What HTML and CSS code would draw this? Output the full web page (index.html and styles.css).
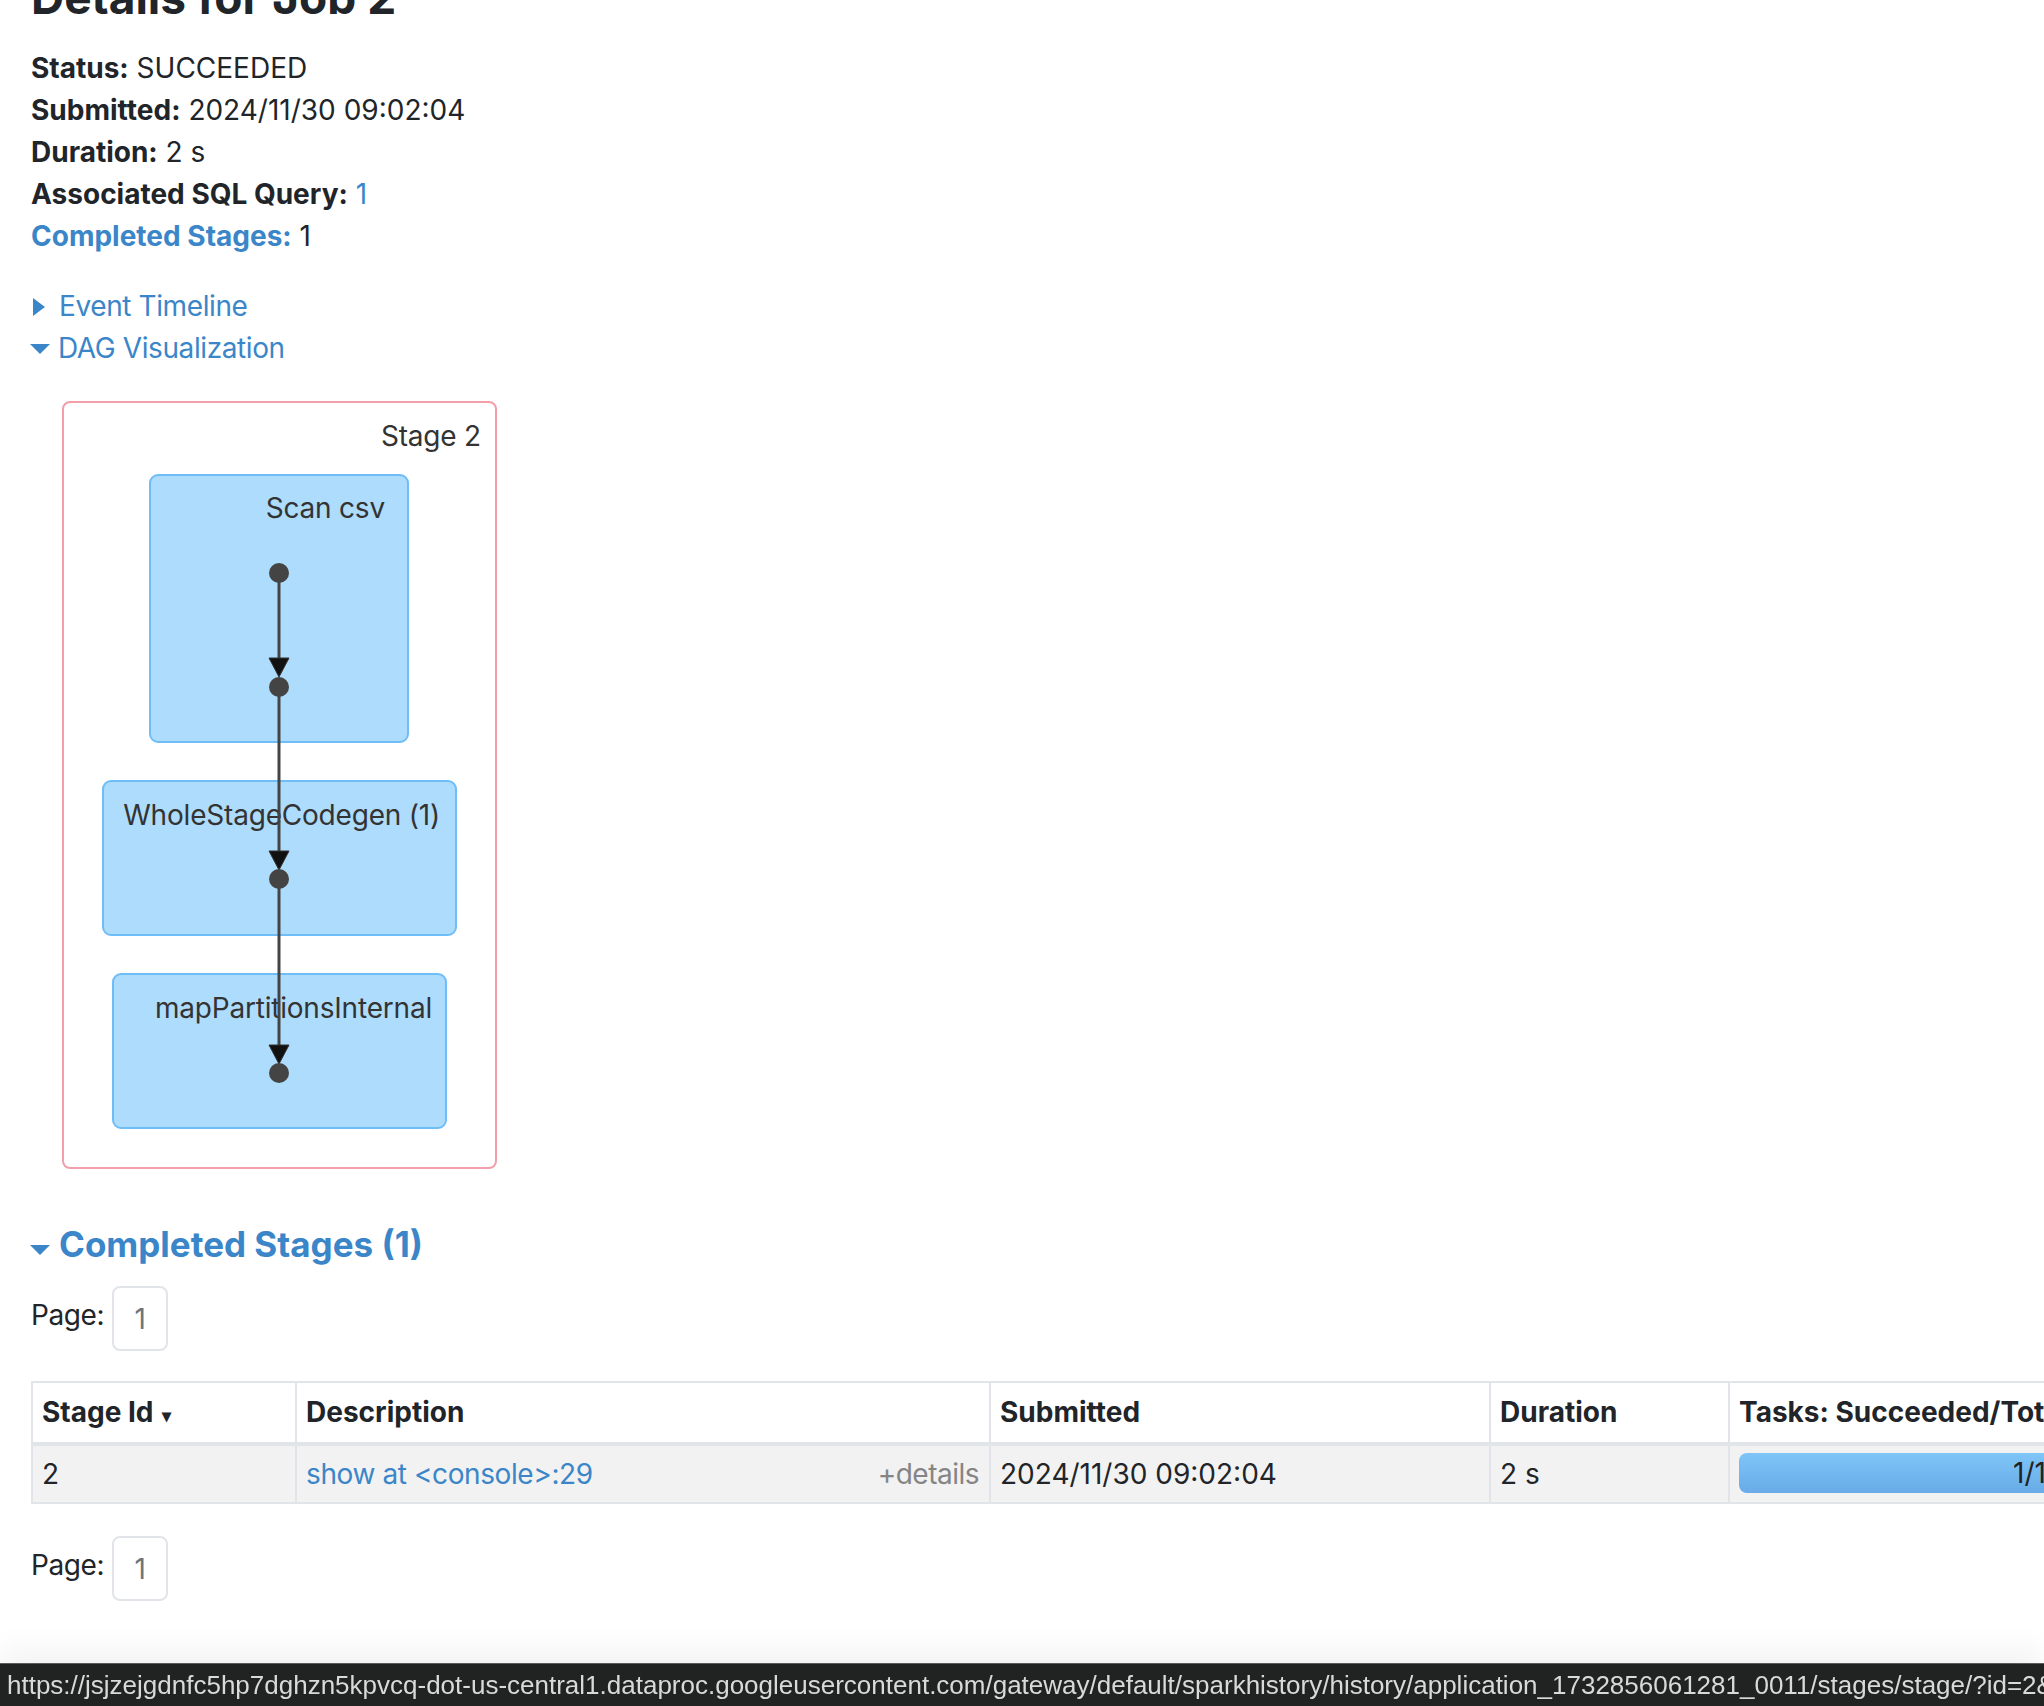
FILE: index.html
```html
<!DOCTYPE html>
<html>
<head>
<meta charset="utf-8">
<title>Details for Job 2</title>
<link rel="stylesheet" href="styles.css">
</head>
<body>
<div class="page">
  <h3 class="title">Details for Job 2</h3>
  <ul class="summary">
    <li><strong>Status:</strong> SUCCEEDED</li>
    <li><strong>Submitted:</strong> 2024/11/30 09:02:04</li>
    <li><strong>Duration:</strong> 2 s</li>
    <li><strong>Associated SQL Query:</strong> <a class="link" href="#">1</a></li>
    <li><a class="link strong-link" href="#">Completed Stages:</a> 1</li>
  </ul>

  <div class="toggle toggle-closed">
    <span class="arrow-closed"></span>
    <a class="link" href="#">Event Timeline</a>
  </div>
  <div class="toggle toggle-open">
    <span class="arrow-open"></span>
    <a class="link" href="#">DAG Visualization</a>
  </div>

  <svg class="dag" width="500" height="804" viewBox="0 0 500 804" xmlns="http://www.w3.org/2000/svg">
    <rect x="32" y="33" width="433" height="766" rx="7" ry="7" fill="#ffffff" stroke="#f29fab" stroke-width="2"/>
    <text x="450" y="77" text-anchor="end" class="dag-label">Stage 2</text>

    <rect x="119" y="106" width="258" height="267" rx="8" ry="8" fill="#addcfc" stroke="#6fbdf6" stroke-width="2"/>
    <text x="354" y="149" text-anchor="end" class="dag-label">Scan csv</text>

    <rect x="72" y="412" width="353" height="154" rx="8" ry="8" fill="#addcfc" stroke="#6fbdf6" stroke-width="2"/>
    <text x="409" y="456" text-anchor="end" class="dag-label">WholeStageCodegen (1)</text>

    <rect x="82" y="605" width="333" height="154" rx="8" ry="8" fill="#addcfc" stroke="#6fbdf6" stroke-width="2"/>
    <text x="401" y="649" text-anchor="end" class="dag-label">mapPartitionsInternal</text>

    <line x1="248" y1="204" x2="248" y2="298" stroke="#444444" stroke-width="3"/>
    <polygon points="238,289 258,289 248,308" fill="#111111" stroke="#333333" stroke-width="1"/>
    <line x1="248" y1="318" x2="248" y2="492" stroke="#444444" stroke-width="3"/>
    <polygon points="238,482 258,482 248,501" fill="#111111" stroke="#333333" stroke-width="1"/>
    <line x1="248" y1="510" x2="248" y2="686" stroke="#444444" stroke-width="3"/>
    <polygon points="238,676 258,676 248,695" fill="#111111" stroke="#333333" stroke-width="1"/>

    <circle cx="248" cy="204" r="10" fill="#444444"/>
    <circle cx="248" cy="318" r="10" fill="#444444"/>
    <circle cx="248" cy="510" r="10" fill="#444444"/>
    <circle cx="248" cy="704" r="10" fill="#444444"/>
  </svg>

  <h4 class="section-title">
    <span class="arrow-open arrow-section"></span>
    <a class="link section-link" href="#">Completed Stages (1)</a>
  </h4>

  <div class="pager pager-top">
    <span class="pager-label">Page:</span>
    <span class="pager-box">1</span>
  </div>

  <table class="stages">
    <colgroup>
      <col class="c-id">
      <col class="c-desc">
      <col class="c-sub">
      <col class="c-dur">
      <col class="c-tasks">
      <col class="c-more">
      <col class="c-more">
    </colgroup>
    <thead>
      <tr>
        <th class="first">Stage Id <span class="sort">&#x25BE;</span></th>
        <th>Description</th>
        <th>Submitted</th>
        <th>Duration</th>
        <th>Tasks: Succeeded/Total</th>
        <th>Input</th>
        <th>Output</th>
      </tr>
    </thead>
    <tbody>
      <tr>
        <td class="first">2</td>
        <td class="desc"><a class="link" href="#">show at &lt;console&gt;:29</a><span class="details">+details</span></td>
        <td>2024/11/30 09:02:04</td>
        <td>2 s</td>
        <td class="tasks"><div class="progress"><span class="progress-text">1/1</span></div></td>
        <td></td>
        <td></td>
      </tr>
    </tbody>
  </table>

  <div class="pager pager-bottom">
    <span class="pager-label">Page:</span>
    <span class="pager-box">1</span>
  </div>
</div>

<div class="statusbar">https://jsjzejgdnfc5hp7dghzn5kpvcq-dot-us-central1.dataproc.googleusercontent.com/gateway/default/sparkhistory/history/application_1732856061281_0011/stages/stage/?id=2&amp;attempt=0</div>
</body>
</html>
```

FILE: styles.css
```css
html, body {
  margin: 0;
  padding: 0;
  background: #ffffff;
  overflow: hidden;
}

body {
  width: 2044px;
  height: 1706px;
  font-family: Inter, "Noto Sans", "Liberation Sans", sans-serif;
  font-size: 28px;
  line-height: 42px;
  color: #212529;
}

.page {
  padding-left: 31px;
  width: 3200px;
}

.title {
  font-size: 46px;
  line-height: 55px;
  font-weight: 700;
  margin: -30px 0 22px 0;
  color: #212529;
}

.summary {
  list-style: none;
  margin: 0 0 28px 0;
  padding: 0;
}

.summary strong {
  font-weight: 700;
}

.link {
  color: #3b86c8;
  text-decoration: none;
  letter-spacing: -0.4px;
}

.strong-link {
  font-weight: 700;
  letter-spacing: 0;
}

.toggle {
  display: flex;
  align-items: flex-start;
  height: 42px;
}

.arrow-closed {
  display: block;
  width: 0;
  height: 0;
  border-top: 9px solid transparent;
  border-bottom: 9px solid transparent;
  border-left: 12px solid #3b86c8;
  margin: 13px 14px 0 2px;
}

.arrow-open {
  display: block;
  width: 0;
  height: 0;
  border-left: 10px solid transparent;
  border-right: 10px solid transparent;
  border-top: 10px solid #3b86c8;
  margin: 17px 8px 0 -1px;
}

.dag {
  display: block;
}

.dag-label {
  font-family: Inter, "Noto Sans", "Liberation Sans", sans-serif;
  font-size: 28px;
  letter-spacing: -0.2px;
  fill: #333333;
}

.section-title {
  display: flex;
  align-items: flex-start;
  font-size: 35px;
  line-height: 43px;
  font-weight: 700;
  margin: 50px 0 20px 0;
}

.section-link {
  letter-spacing: 0;
}

.arrow-section {
  margin-top: 22px;
  margin-left: -1px;
  margin-right: 9px;
}

.pager {
  display: flex;
  align-items: flex-start;
}

.pager-label {
  margin-top: 8px;
  margin-right: 8px;
  letter-spacing: -0.4px;
}

.pager-box {
  display: block;
  box-sizing: border-box;
  width: 56px;
  height: 65px;
  border: 2px solid #e1e4e8;
  border-radius: 8px;
  padding: 10px 0 9px 0;
  text-align: center;
  color: #6c757d;
}

.pager-top {
  margin-bottom: 30px;
}

.pager-bottom {
  margin-top: 32px;
}

.stages {
  table-layout: fixed;
  border-collapse: separate;
  border-spacing: 0;
  width: 2800px;
}

.c-id { width: 266px; }
.c-desc { width: 694px; }
.c-sub { width: 500px; }
.c-dur { width: 239px; }
.c-tasks { width: 602px; }
.c-more { width: 250px; }

.stages th,
.stages td {
  box-sizing: border-box;
  text-align: left;
  vertical-align: top;
  white-space: nowrap;
  border-right: 2px solid #e1e4e8;
}

.stages th {
  padding: 8px 9px 5px 9px;
  font-weight: 700;
  background: #ffffff;
  border-top: 2px solid #e1e4e8;
  border-bottom: 4px solid #e1e4e8;
}

.stages td {
  padding: 7px 9px 7px 9px;
  background: #f2f2f2;
  border-bottom: 2px solid #e1e4e8;
}

.stages .first {
  border-left: 2px solid #e1e4e8;
}

.sort {
  font-size: 18px;
  margin-left: 2px;
}

.details {
  float: right;
  color: #858585;
  margin-right: 1px;
  letter-spacing: -0.5px;
}

.stages td.tasks {
  padding: 7px 10px 0 9px;
}

.progress {
  height: 40px;
  border-radius: 8px;
  background: linear-gradient(to bottom, #7fc5f8, #68abe7);
  text-align: center;
}

.progress-text {
  display: block;
  line-height: 40px;
  color: #222222;
}

.statusbar {
  position: fixed;
  left: 0;
  right: 0;
  bottom: 0;
  height: 43px;
  box-sizing: border-box;
  padding-left: 7px;
  background: #212323;
  border-top: 1px solid #5a5c5c;
  color: #d9d9d9;
  font-family: "Liberation Sans", Arial, sans-serif;
  font-size: 26px;
  line-height: 42px;
  white-space: nowrap;
  overflow: hidden;
  box-shadow: 0 -14px 30px rgba(0, 0, 0, 0.05);
}
```
